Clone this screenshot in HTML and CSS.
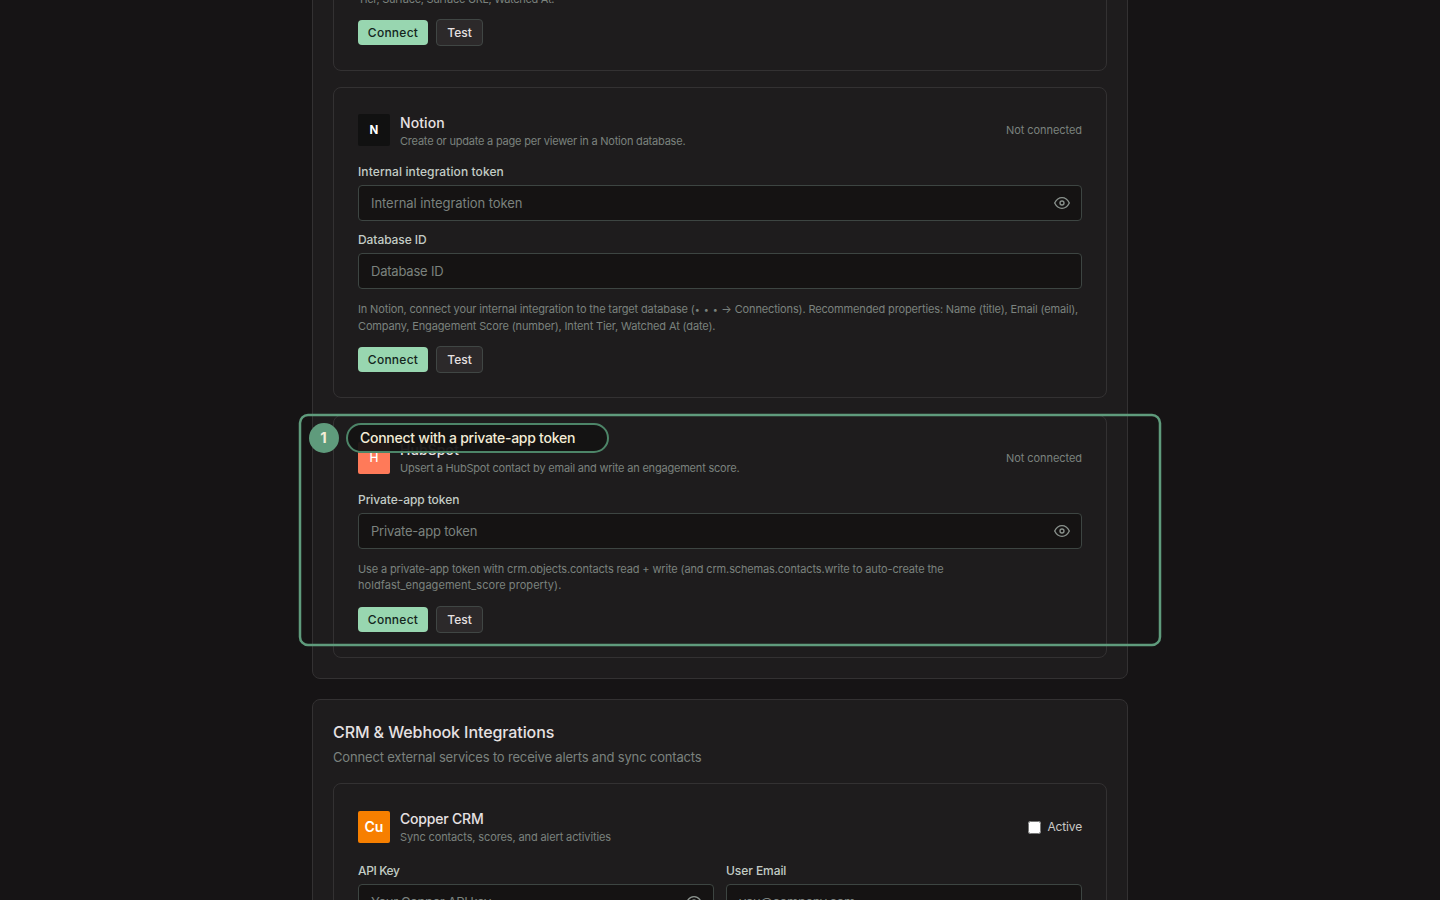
FILE: index.html
```
<!DOCTYPE html>
<html lang="en">
<head>
    <meta charset="UTF-8">
    <meta name="viewport" content="width=device-width, initial-scale=1.0">
    <title>Integrations</title>
    <link rel="stylesheet" href="styles.css">
</head>
<body>
    <svg width="0" height="0" class="sprite">
        <symbol id="eye" viewBox="0 0 24 24">
            <path d="M1 12s4-8 11-8 11 8 11 8-4 8-11 8-11-8-11-8z"/>
            <circle cx="12" cy="12" r="3"/>
        </symbol>
    </svg>

    <main class="page">
        <section class="panel">
            <div class="card">
                <p class="hint hint-tight">Tier, Surface, Surface URL, Watched At.</p>
                <div class="actions">
                    <button class="btn btn-primary">Connect</button>
                    <button class="btn">Test</button>
                </div>
            </div>

            <div class="card">
                <div class="card-header">
                    <div class="logo logo-notion">N</div>
                    <div class="card-text">
                        <h3>Notion</h3>
                        <p>Create or update a page per viewer in a Notion database.</p>
                    </div>
                    <span class="status">Not connected</span>
                </div>
                <label for="notion-token" class="label-wide">Internal integration token</label>
                <div class="field">
                    <input id="notion-token" type="password" placeholder="Internal integration token" class="input-wide">
                    <svg class="eye"><use href="#eye"/></svg>
                </div>
                <label for="notion-db">Database ID</label>
                <div class="field">
                    <input id="notion-db" type="text" placeholder="Database ID">
                </div>
                <p class="hint">In Notion, connect your internal integration to the target database (<span class="dots">• • •</span> → Connections). Recommended properties: Name (title), Email (email),<br>Company, Engagement Score (number), Intent Tier, Watched At (date).</p>
                <div class="actions">
                    <button class="btn btn-primary">Connect</button>
                    <button class="btn">Test</button>
                </div>
            </div>

            <div class="card card-hubspot">
                <div class="card-header">
                    <div class="logo logo-hubspot">H</div>
                    <div class="card-text">
                        <h3>HubSpot</h3>
                        <p>Upsert a HubSpot contact by email and write an engagement score.</p>
                    </div>
                    <span class="status">Not connected</span>
                </div>
                <label for="hubspot-token">Private-app token</label>
                <div class="field">
                    <input id="hubspot-token" type="password" placeholder="Private-app token">
                    <svg class="eye"><use href="#eye"/></svg>
                </div>
                <p class="hint">Use a private-app token with crm.objects.contacts read + write (and crm.schemas.contacts.write to auto-create the<br><span class="prop">holdfast_engagement_score property).</span></p>
                <div class="actions">
                    <button class="btn btn-primary">Connect</button>
                    <button class="btn">Test</button>
                </div>
            </div>
        </section>

        <section class="panel">
            <h2>CRM &amp; Webhook Integrations</h2>
            <p class="subtitle">Connect external services to receive alerts and sync contacts</p>
            <div class="card card-copper">
                <div class="card-header">
                    <div class="logo logo-copper">Cu</div>
                    <div class="card-text">
                        <h3>Copper CRM</h3>
                        <p>Sync contacts, scores, and alert activities</p>
                    </div>
                    <div class="toggle">
                        <input type="checkbox" id="copper-active">
                        <span>Active</span>
                    </div>
                </div>
                <div class="row">
                    <div class="col">
                        <label for="copper-key" class="label-narrow">API Key</label>
                        <div class="field">
                            <input id="copper-key" type="password" placeholder="Your Copper API key" class="input-narrow">
                            <svg class="eye"><use href="#eye"/></svg>
                        </div>
                    </div>
                    <div class="col">
                        <label for="copper-email">User Email</label>
                        <div class="field">
                            <input id="copper-email" type="email" placeholder="you@company.com" class="input-narrow">
                        </div>
                    </div>
                </div>
            </div>
        </section>
    </main>

    <!-- Step highlight -->
    <div class="highlight">
        <svg class="highlight-frame" width="864" height="234">
            <rect x="2" y="2" width="860" height="230" rx="8"/>
        </svg>
        <div class="step">1</div>
        <div class="step-label">Connect with a private-app token</div>
    </div>
</body>
</html>
```
FILE: styles.css
```
* {
    box-sizing: border-box;
}
body {
    margin: 0;
    height: 900px;
    overflow: hidden;
    position: relative;
    background: #161415;
    color: #e6e1e2;
    font-family: Inter, sans-serif;
}
h2, h3, p {
    margin: 0;
}
.sprite {
    position: absolute;
}
.page {
    width: 816px;
    margin: -55.5px auto 0;
    display: flex;
    flex-direction: column;
    gap: 20px;
}
.panel {
    background: #1e1c1d;
    border: 1px solid #333132;
    border-radius: 8px;
    padding: 20px;
}
.panel h2 {
    font-size: 16px;
    font-weight: 500;
    line-height: 24px;
    letter-spacing: -0.09px;
}
.subtitle {
    margin: 3px 0 16px;
    font-size: 13px;
    line-height: 20px;
    letter-spacing: -0.17px;
    color: #7b827e;
}
.card {
    border: 1px solid #333132;
    border-radius: 8px;
    padding: 24px;
    margin-bottom: 16px;
}
.card:last-child {
    margin-bottom: 0;
}
.card-hubspot {
    margin-top: 17px;
}
.card-header {
    display: flex;
    align-items: center;
    gap: 10px;
    height: 36px;
    margin-bottom: 16px;
}
.logo {
    width: 32px;
    height: 32px;
    border-radius: 2px;
    display: flex;
    align-items: center;
    justify-content: center;
    color: #fff;
    font-size: 11.5px;
    font-weight: 700;
}
.logo-notion {
    background: #111;
}
.logo-hubspot {
    padding-bottom: 1px;
    background: #ff7a59;
    font-size: 12px;
    font-weight: 500;
}
.logo-copper {
    padding-bottom: 1px;
    background: #f77f00;
    font-size: 14px;
    font-weight: 600;
}
.card-text {
    flex: 1;
}
.card-text h3 {
    font-size: 14px;
    font-weight: 500;
    line-height: 21px;
    letter-spacing: 0.08px;
}
.card-text p {
    font-size: 11px;
    line-height: 16px;
    letter-spacing: -0.21px;
    color: #7b827e;
}
.card-hubspot .card-text {
    margin-top: -1px;
}
.card-hubspot .card-text p {
    letter-spacing: -0.2px;
}
.status {
    font-size: 11px;
    letter-spacing: -0.06px;
    color: #7b827e;
}
label {
    display: block;
    margin-bottom: 5px;
    font-size: 12px;
    font-weight: 500;
    line-height: 16px;
    letter-spacing: -0.07px;
    color: #c3ccc5;
}
.label-wide {
    letter-spacing: 0.1px;
}
.label-narrow {
    letter-spacing: -0.38px;
}
.field {
    display: flex;
    align-items: center;
    height: 36px;
    padding: 0 11px 0 12px;
    background: #151313;
    border: 1px solid #3d4542;
    border-radius: 4px;
}
.field + label {
    margin-top: 11px;
}
.field input {
    flex: 1;
    min-width: 0;
    padding: 0;
    border: none;
    outline: none;
    background: none;
    color: #e6e1e2;
    font-family: inherit;
    font-size: 13px;
    letter-spacing: -0.21px;
}
.field .input-wide {
    letter-spacing: -0.06px;
}
.field .input-narrow {
    letter-spacing: -0.38px;
}
.field input::placeholder {
    color: #7b827e;
}
.eye {
    width: 16px;
    height: 16px;
    fill: none;
    stroke: #8b938e;
    stroke-width: 2;
    stroke-linecap: round;
    stroke-linejoin: round;
}
.hint {
    margin: 12px 0;
    font-size: 11px;
    line-height: 16.5px;
    letter-spacing: -0.143px;
    color: #7b827e;
    white-space: nowrap;
}
.hint-tight {
    margin-top: 0;
    letter-spacing: -0.29px;
}
.dots {
    font-size: 9px;
    line-height: 1;
    letter-spacing: 0.7px;
}
.card-hubspot .hint {
    line-height: 16px;
    margin-bottom: 13px;
}
.prop {
    letter-spacing: 0.06px;
}
.actions {
    display: flex;
    align-items: center;
    gap: 8px;
}
.btn {
    height: 27px;
    width: 47px;
    padding: 0;
    background: #2c292a;
    border: 1px solid #404644;
    border-radius: 4px;
    color: #e6e1e2;
    font-family: inherit;
    font-size: 12px;
    font-weight: 500;
}
.btn-primary {
    width: 70px;
    height: 25px;
    background: #98d6b0;
    border: none;
    color: #14251c;
    letter-spacing: 0.25px;
}
.card-copper .card-header {
    height: 38px;
    margin-bottom: 17px;
}
.card-copper .card-text {
    margin-top: -1px;
}
.card-copper .card-text h3 {
    letter-spacing: -0.2px;
}
.card-copper .card-text p {
    letter-spacing: -0.12px;
}
.toggle {
    display: flex;
    align-items: center;
    gap: 6px;
    font-size: 12px;
    letter-spacing: -0.15px;
    color: #c9c8c6;
}
.toggle input {
    margin: 0;
}
.toggle span {
    padding-bottom: 2px;
}
.row {
    display: flex;
    gap: 12px;
}
.col {
    flex: 1;
}
.highlight {
    position: absolute;
    left: 298px;
    top: 413px;
    width: 864px;
    height: 234px;
    display: flex;
    align-items: flex-start;
    gap: 7px;
    padding: 10px 11px;
}
.highlight-frame {
    position: absolute;
    left: 0;
    top: 0;
    fill: none;
    stroke: #5f9b7c;
    stroke-width: 2.5;
}
.step {
    width: 30px;
    height: 30px;
    padding-right: 1px;
    border-radius: 50%;
    background: #5f9b7c;
    color: #f3ecd6;
    font-size: 15px;
    font-weight: 700;
    line-height: 30px;
    text-align: center;
}
.step-label {
    width: 263px;
    height: 30px;
    padding-left: 12px;
    border: 2px solid #4d8568;
    border-radius: 15px;
    background: rgba(20, 19, 19, 0.94);
    color: #f3ecd6;
    font-size: 14px;
    font-weight: 500;
    line-height: 26px;
    letter-spacing: -0.26px;
}
```
